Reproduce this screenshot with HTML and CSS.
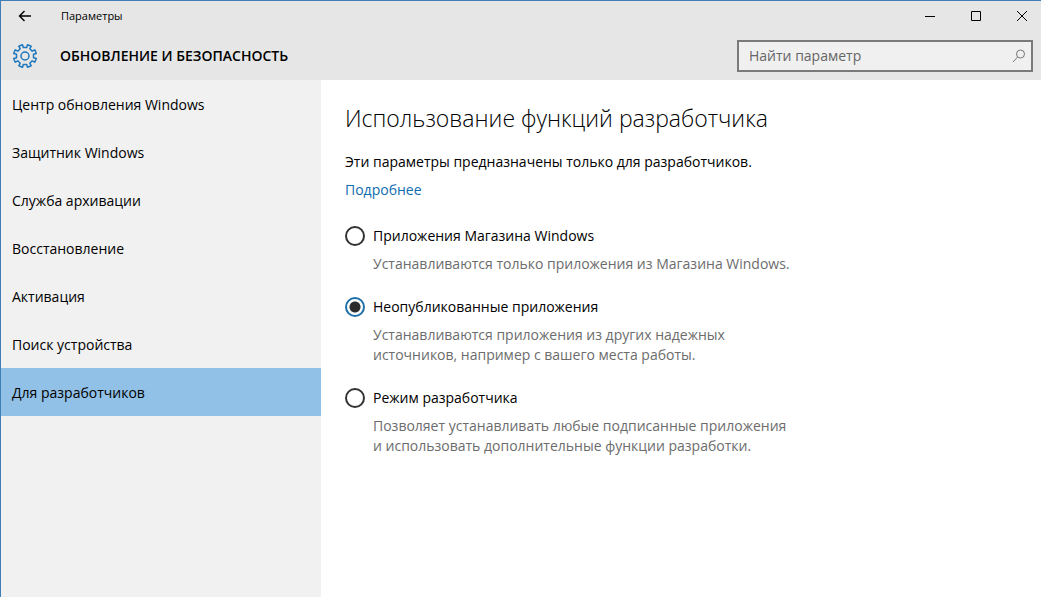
FILE: index.html
```html
<!DOCTYPE html>
<html lang="ru">
<head>
<meta charset="utf-8">
<title>Параметры</title>
<link rel="stylesheet" href="styles.css">
</head>
<body>
<div class="window">
  <header class="header">
    <div class="titlebar">
      <button class="back" type="button" aria-label="Назад">
        <svg width="14" height="12" viewBox="0 0 14 12"><path d="M13 6H1.5M6.5 1L1.5 6L6.5 11"/></svg>
      </button>
      <span class="window-name">Параметры</span>
      <div class="controls">
        <button type="button" aria-label="Свернуть"><svg width="10" height="10" viewBox="0 0 10 10"><path d="M0 5.5H10"/></svg></button>
        <button type="button" aria-label="Развернуть"><svg width="10" height="10" viewBox="0 0 10 10"><path d="M.5 .5H9.5V9.5H.5Z"/></svg></button>
        <button type="button" aria-label="Закрыть"><svg width="10" height="10" viewBox="0 0 10 10"><path d="M0 0L10 10M10 0L0 10"/></svg></button>
      </div>
    </div>
    <div class="section-bar">
      <svg class="gear" width="26" height="26" viewBox="-13 -13 26 26">
        <path d="M8.5 1.7L11.3 2.5L9.8 6.2L7.2 4.8L4.8 7.2L6.2 9.8L2.5 11.3L1.7 8.5H-1.7L-2.5 11.3L-6.2 9.8L-4.8 7.2L-7.2 4.8L-9.8 6.2L-11.3 2.5L-8.5 1.7V-1.7L-11.3 -2.5L-9.8 -6.2L-7.2 -4.8L-4.8 -7.2L-6.2 -9.8L-2.5 -11.3L-1.7 -8.5H1.7L2.5 -11.3L6.2 -9.8L4.8 -7.2L7.2 -4.8L9.8 -6.2L11.3 -2.5L8.5 -1.7Z"/>
        <circle r="4"/>
      </svg>
      <h1 class="section-name">ОБНОВЛЕНИЕ И БЕЗОПАСНОСТЬ</h1>
      <label class="search">
        <input type="text" placeholder="Найти параметр" aria-label="Найти параметр">
        <svg width="14" height="14" viewBox="0 0 14 14"><circle cx="8.5" cy="5" r="4"/><path d="M5.6 8L1 13"/></svg>
      </label>
    </div>
  </header>
  <div class="body">
    <nav class="sidebar">
      <a href="#update">Центр обновления Windows</a>
      <a href="#defender">Защитник Windows</a>
      <a href="#backup">Служба архивации</a>
      <a href="#recovery">Восстановление</a>
      <a href="#activation">Активация</a>
      <a href="#find">Поиск устройства</a>
      <a class="active" href="#developers" aria-current="page">Для разработчиков</a>
    </nav>
    <main class="content">
      <h2 class="title">Использование функций разработчика</h2>
      <p class="intro">Эти параметры предназначены только для разработчиков.</p>
      <a class="more" href="#more">Подробнее</a>
      <div class="options">
        <div class="option">
          <input type="radio" name="mode" id="store" aria-describedby="store-note">
          <label for="store">Приложения Магазина Windows</label>
          <p class="note" id="store-note">Устанавливаются только приложения из Магазина Windows.</p>
        </div>
        <div class="option">
          <input type="radio" name="mode" id="sideload" aria-describedby="sideload-note" checked>
          <label for="sideload">Неопубликованные приложения</label>
          <p class="note" id="sideload-note">Устанавливаются приложения из других надежных<br>источников, например с вашего места работы.</p>
        </div>
        <div class="option">
          <input type="radio" name="mode" id="dev" aria-describedby="dev-note">
          <label for="dev">Режим разработчика</label>
          <p class="note" id="dev-note">Позволяет устанавливать любые подписанные приложения<br>и использовать дополнительные функции разработки.</p>
        </div>
      </div>
    </main>
  </div>
</div>
</body>
</html>
```
FILE: styles.css
```css
* { box-sizing: border-box; }
body {
  margin: 0;
  font: 14px/20px "Open Sans", "Noto Sans", sans-serif;
  color: #000;
  background: #fff;
}
h1, h2, p { margin: 0; font-weight: 400; }
svg { fill: none; stroke: #000; display: block; }
button { border: 0; padding: 0; background: none; display: grid; place-items: center; }

.window {
  min-height: 100vh;
  display: flex;
  flex-direction: column;
  border-top: 1px solid #3f7fb5;
  border-left: 1px solid #3f7fb5;
}
.header { background: #e6e6e6; }
.titlebar { display: flex; align-items: center; height: 30px; }
.back { width: 48px; height: 30px; }
.back svg { stroke-width: 1.4; }
.window-name { margin-left: 12px; font-size: 11px; line-height: 30px; }
.controls { display: flex; gap: 8px; margin-left: auto; }
.controls button { width: 38px; height: 30px; }

.section-bar {
  display: flex;
  align-items: center;
  height: 49px;
  padding: 0 8px 0 11px;
}
.gear { stroke: #1f78bd; stroke-width: 1.5; stroke-linejoin: round; }
.section-name { margin-left: 22px; font-size: 14px; line-height: 20px; font-weight: 600; }
.search {
  display: flex;
  align-items: center;
  width: 296px;
  height: 32px;
  margin-left: auto;
  padding: 0 5px 0 10px;
  border: 2px solid #7a7a7a;
  background: #f0f0f0;
}
.search input {
  flex: 1;
  min-width: 0;
  border: 0;
  padding: 0;
  outline: 0;
  background: none;
  font: inherit;
}
.search input::placeholder { color: #666; opacity: 1; }
.search svg { stroke: #777; }

.body { flex: 1; display: flex; }
.sidebar { width: 320px; background: #f1f1f1; }
.sidebar a {
  display: block;
  padding: 15px 11px 13px;
  color: #000;
  text-decoration: none;
}
.sidebar .active { background: #91c1e7; }

.content { flex: 1; padding: 22px 24px; }
.title { font-size: 23px; line-height: 32px; font-weight: 300; }
.intro { margin-top: 18px; }
.more { display: block; width: fit-content; margin-top: 8px; color: #0f6cb0; text-decoration: none; }
.options { display: grid; gap: 23px; margin-top: 26px; }
.option { display: grid; grid-template-columns: 20px 1fr; column-gap: 8px; row-gap: 8px; }
.option input {
  appearance: none;
  width: 20px;
  height: 20px;
  margin: 0;
  border: 2px solid #333;
  border-radius: 50%;
}
.option input:checked {
  border-color: #1f6fa8;
  background: radial-gradient(circle, #2b2b2b 5px, transparent 6px);
}
.note { grid-column: 2; color: #6c6c6c; }
```
